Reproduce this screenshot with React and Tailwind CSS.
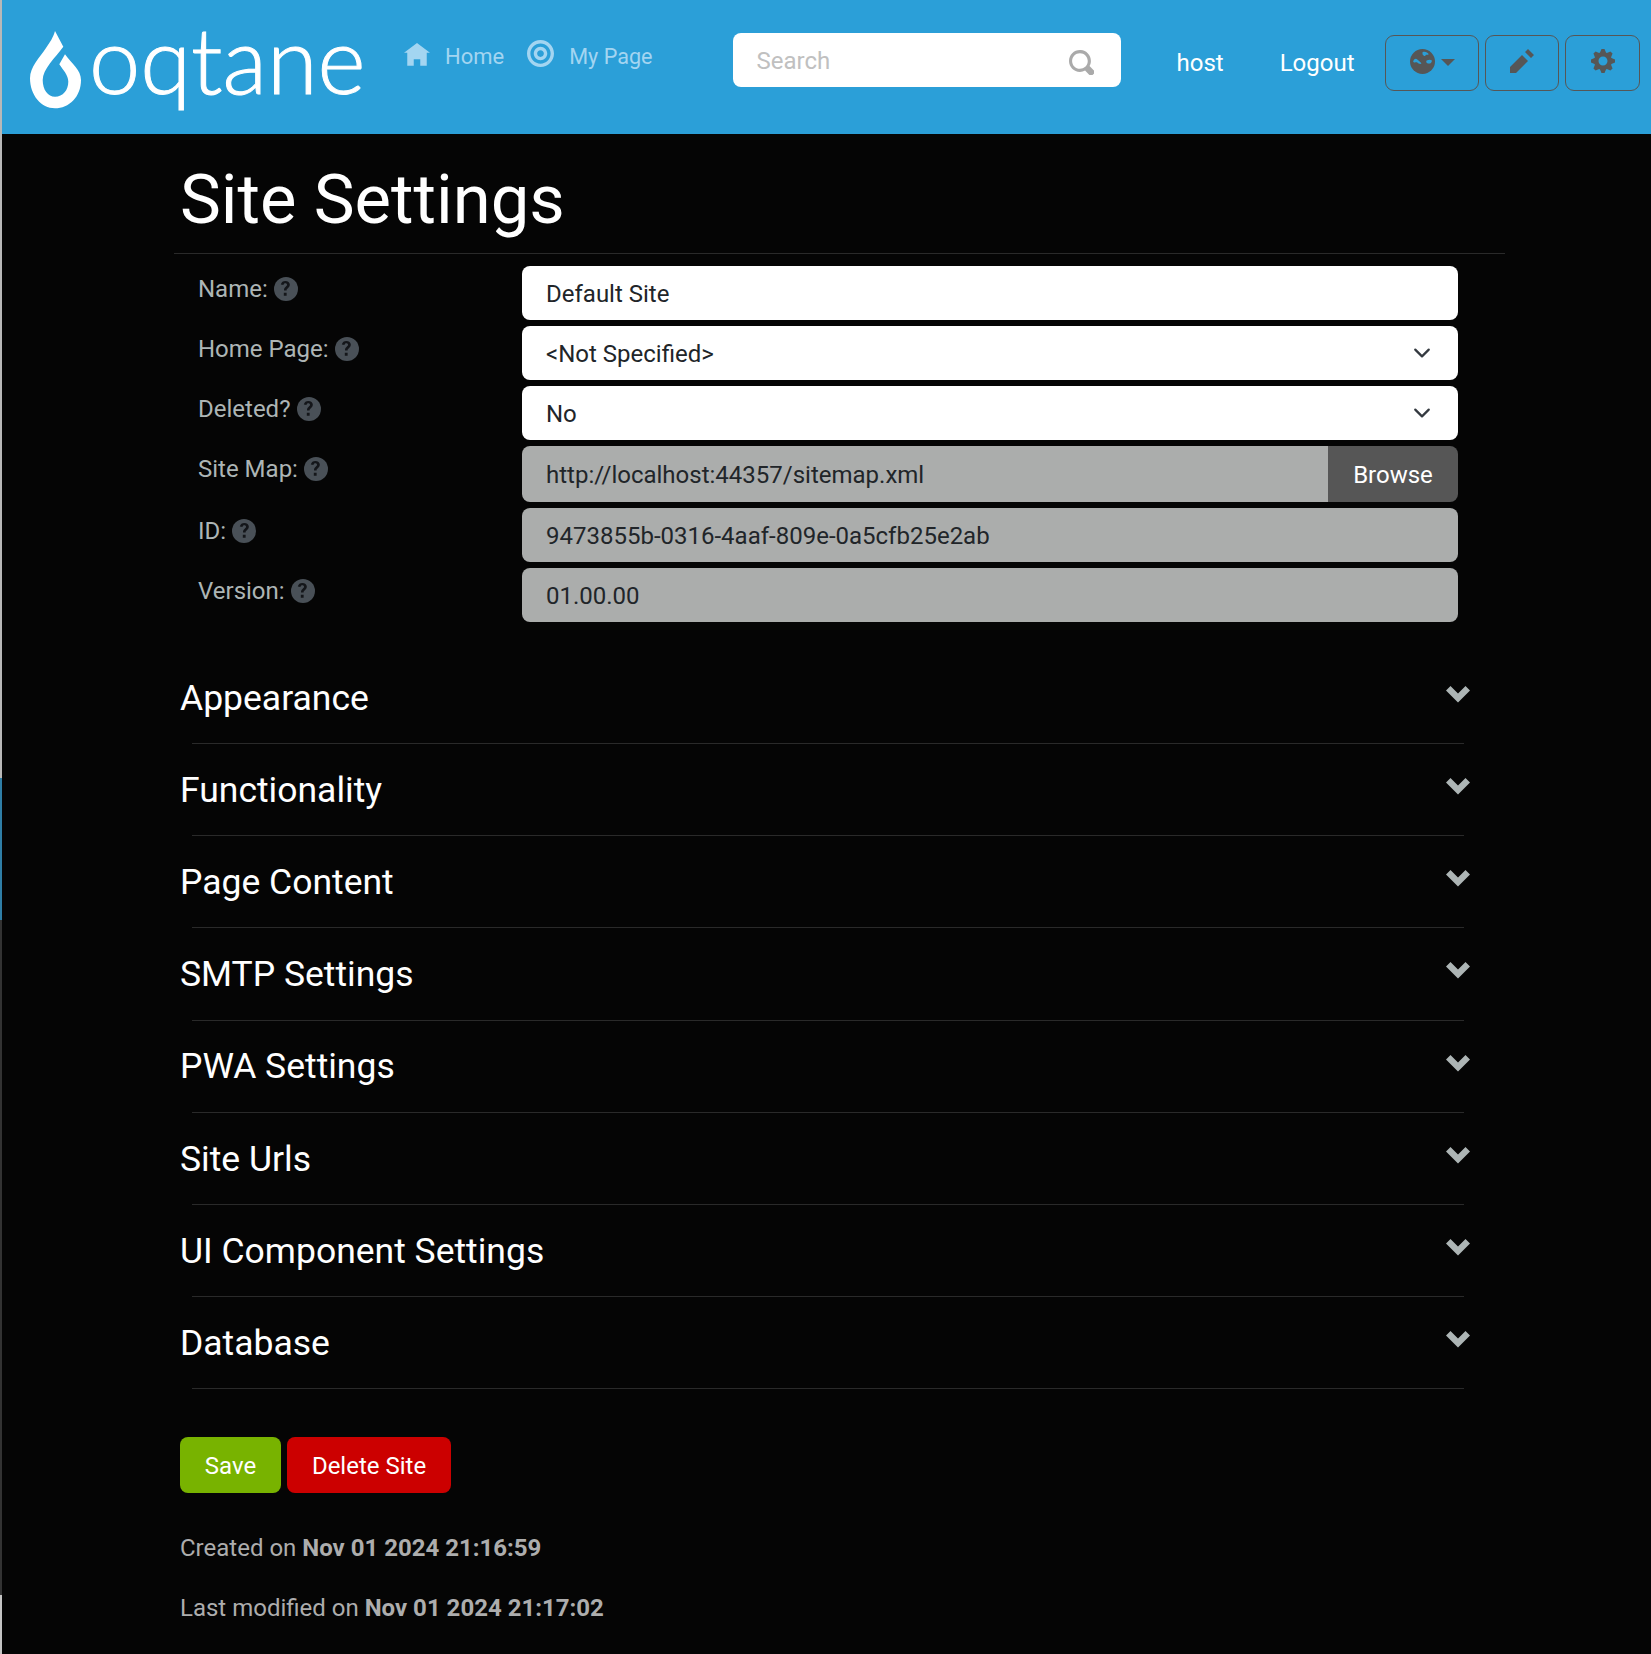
import React from 'react';

const icons = {
  home: 'M4 0l-4 3h1v4h2v-2h2v2h2v-4.03l1 .03-4-3z',
  target: 'M4 0c-2.2 0-4 1.8-4 4s1.8 4 4 4 4-1.8 4-4-1.8-4-4-4zm0 1c1.66 0 3 1.34 3 3s-1.34 3-3 3-3-1.34-3-3 1.34-3 3-3zm0 1c-1.1 0-2 .9-2 2s.9 2 2 2 2-.9 2-2-.9-2-2-2zm0 1c.56 0 1 .44 1 1s-.44 1-1 1-1-.44-1-1 .44-1 1-1z',
  pencil: 'M6 0l-1 1 2 2 1-1-2-2zm-2 2l-4 4v2h2l4-4-2-2z',
  cog: 'M3.5 0l-.5 1.19c-.1.03-.19.08-.28.13l-1.19-.5-.72.72.5 1.19c-.05.1-.09.18-.13.28l-1.19.5v1l1.19.5c.04.1.08.18.13.28l-.5 1.19.72.72 1.19-.5c.09.04.18.09.28.13l.5 1.19h1l.5-1.19c.09-.04.19-.08.28-.13l1.19.5.72-.72-.5-1.19c.04-.09.09-.19.13-.28l1.19-.5v-1l-1.19-.5c-.03-.09-.08-.19-.13-.28l.5-1.19-.72-.72-1.19.5c-.09-.04-.19-.09-.28-.13l-.5-1.19h-1zm.5 2.5c.83 0 1.5.67 1.5 1.5s-.67 1.5-1.5 1.5-1.5-.67-1.5-1.5.67-1.5 1.5-1.5z',
  search: 'M3.5 0c-1.93 0-3.5 1.57-3.5 3.5s1.57 3.5 3.5 3.5c.59 0 1.17-.14 1.66-.41a1 1 0 0 0 .13.13l1 1a1.02 1.02 0 1 0 1.44-1.44l-1-1a1 1 0 0 0-.16-.13c.27-.49.44-1.06.44-1.66 0-1.93-1.57-3.5-3.5-3.5zm0 1c1.39 0 2.5 1.11 2.5 2.5 0 .66-.24 1.27-.66 1.72-.01.01-.02.02-.03.03a1 1 0 0 0-.13.13c-.44.4-1.04.63-1.69.63-1.39 0-2.5-1.11-2.5-2.5s1.11-2.5 2.5-2.5z',
  chevron: 'M1.5 1l-1.5 1.5 4 4 4-4-1.5-1.5-2.5 2.5-2.5-2.5z',
};

function Icon({ name, className }) {
  return (
    <svg viewBox="0 0 8 8" className={className} fill="currentColor">
      <path d={icons[name]} />
    </svg>
  );
}

function Globe() {
  return (
    <svg viewBox="0 0 24 24" className="mb-[4px] h-[25px] w-[25px]">
      <circle cx="12" cy="12" r="12" fill="#565656" />
      <path d="M3 12c1-3 3-3 4-2s3 2 4 4c-1 1-3 0-4-1s-3 1-4-1z" fill="#2b9fd8" />
      <path d="M12 3c2-1 5 0 6 2-1 1-3 0-3 1s-2 1-3-1z" fill="#2b9fd8" />
      <path d="M16 11c2-1 4-1 5 0 0 2-1 3-3 3s-3-2-2-3z" fill="#2b9fd8" />
    </svg>
  );
}

function Help() {
  return (
    <span className="ml-[6px] inline-flex h-[24px] w-[24px] shrink-0 items-center justify-center rounded-full bg-[#495057]">
      <svg viewBox="0 0 8 8" className="h-[15px] w-[15px] text-[#14161a]" fill="currentColor">
        <path d="M3.9 0c-1.2 0-2.1.6-2.4 1.8l1.4.3c.1-.6.5-.9 1-.9s.9.3.9.8c0 .4-.2.6-.7 1-.6.5-.9 1-.9 1.8v.2h1.4v-.2c0-.4.2-.6.7-1 .7-.5 1-1.1 1-1.9C6.3.8 5.3 0 3.9 0zM3.1 6.3v1.6h1.5v-1.6z" />
      </svg>
    </span>
  );
}

function Row({ label, mt, children }) {
  return (
    <div className={`flex ${mt}`}>
      <label className="flex h-[44px] w-[348px] items-center pl-[24px] pt-[1px] text-[#adb5b5]">
        {label}
        <Help />
      </label>
      {children}
    </div>
  );
}

function Caret() {
  return (
    <svg viewBox="0 0 16 16" className="mb-[3px] h-[18px] w-[18px]" fill="none" stroke="#343a40" strokeWidth="2" strokeLinecap="round" strokeLinejoin="round">
      <path d="M2 5l6 6 6-6" />
    </svg>
  );
}

const inputBox = 'flex h-[54px] w-[936px] items-center rounded-[8px] px-[24px] pt-[2px]';

const sections = ['Appearance', 'Functionality', 'Page Content', 'SMTP Settings', 'PWA Settings', 'Site Urls', 'UI Component Settings', 'Database'];

export default function App() {
  return (
    <div className="relative min-h-[1654px] bg-[#050505] font-['Roboto',sans-serif] text-[24px] leading-none">
      <div className="absolute left-0 top-0 z-10 flex h-full w-[2px] flex-col">
        <div className="h-[778px] bg-[#b8b8b8]" />
        <div className="h-[142px] bg-[#2f7ea6]" />
        <div className="h-[675px] bg-[#333333]" />
        <div className="flex-1 bg-[#c4c4c4]" />
      </div>

      <nav className="flex h-[134px] bg-[#2b9fd8] pl-[30px]">
        <div className="flex w-[345px] items-start">
          <svg viewBox="0 0 51 78" className="mt-[31px] h-[78px] w-[51px] shrink-0" fill="#fff">
            <path d="M25 0L33.3 15.7C25 27 12.7 38 12.7 49C12.7 59 18 65.7 25 65.7C33 65.7 38.3 59 38.3 50.7C38.3 44 33 39 29.3 33.3L35 23.3C42 33 51 39 51 49C51 66 39 77.3 25 77.3C11 77.3 0 64 0 47.3C0 36 10 26 16 17C20 11 23 7 25 0Z" />
          </svg>
          <span className="ml-[8px] mt-[9px] font-['Lato',sans-serif] text-[92px] font-light leading-[100px] text-white [-webkit-text-stroke:1px_white]">oqtane</span>
        </div>
        <div className="flex items-start pt-[40px] text-[22px] text-[#a3d5f1]">
          <Icon name="home" className="ml-[29px] mt-[3px] h-[26px] w-[26px]" />
          <span className="ml-[15px] mt-[6px]">Home</span>
          <Icon name="target" className="ml-[23px] h-[27px] w-[27px]" />
          <span className="ml-[15px] mt-[6px] text-[21.6px]">My Page</span>
        </div>
        <div className="ml-[81px] mt-[33px] flex h-[54px] w-[388px] items-center justify-between rounded-[8px] bg-white pl-[23px] pr-[27px] pt-[2px]">
          <span className="text-[#c0c0c0]">Search</span>
          <Icon name="search" className="mt-[2px] h-[25px] w-[25px] text-[#aaaaaa]" />
        </div>
        <a className="ml-[55px] mt-[51px] text-white">host</a>
        <a className="ml-[56px] mt-[51px] text-white">Logout</a>
        <div className="ml-[31px] mt-[35px] flex h-[56px] items-start gap-[6px] text-[#565656]">
          <button className="flex h-[56px] w-[94px] items-center justify-center rounded-[9px] border border-[#565656]">
            <Globe />
            <span className="ml-[6px] mb-[2px] h-0 w-0 border-x-[7px] border-t-[7px] border-x-transparent border-t-[#565656]" />
          </button>
          <button className="flex h-[56px] w-[74px] items-center justify-center rounded-[9px] border border-[#565656]">
            <Icon name="pencil" className="mb-[4px] h-[24px] w-[24px]" />
          </button>
          <button className="flex h-[56px] w-[75px] items-center justify-center rounded-[9px] border border-[#565656]">
            <Icon name="cog" className="mb-[4px] h-[24px] w-[24px]" />
          </button>
        </div>
      </nav>

      <h1 className="ml-[180px] mt-[30px] text-[68.8px] font-normal leading-[72px] text-white">Site Settings</h1>
      <div className="ml-[174px] mt-[17px] h-px w-[1331px] bg-[#2a2a2a]" />

      <div className="ml-[174px] mt-[12px]">
        <Row label="Name:">
          <div className={`${inputBox} bg-white text-[#212529]`}>Default Site</div>
        </Row>
        <Row label="Home Page:" mt="mt-[6px]">
          <div className={`${inputBox} justify-between bg-white pr-[27px] text-[#212529]`}>
            &lt;Not Specified&gt;
            <Caret />
          </div>
        </Row>
        <Row label="Deleted?" mt="mt-[6px]">
          <div className={`${inputBox} justify-between bg-white pr-[27px] text-[#212529]`}>
            No
            <Caret />
          </div>
        </Row>
        <Row label="Site Map:" mt="mt-[6px]">
          <div className="flex h-[56px] w-[936px] overflow-hidden rounded-[8px] text-[#212529]">
            <div className="flex flex-1 items-center bg-[#abadac] px-[24px] pt-[2px]">http://localhost:44357/sitemap.xml</div>
            <div className="flex w-[130px] items-center justify-center bg-[#565656] pt-[2px] text-white">Browse</div>
          </div>
        </Row>
        <Row label="ID:" mt="mt-[6px]">
          <div className={`${inputBox} bg-[#abadac] text-[#212529]`}>9473855b-0316-4aaf-809e-0a5cfb25e2ab</div>
        </Row>
        <Row label="Version:" mt="mt-[6px]">
          <div className={`${inputBox} bg-[#abadac] text-[#212529]`}>01.00.00</div>
        </Row>
      </div>

      <div className="mt-[30px]">
        {sections.map((title) => (
          <div key={title}>
            <div className="flex h-[91.15px] items-center justify-between pl-[180px] pr-[181px] pt-[2px]">
              <span className="text-[35.5px] text-white">{title}</span>
              <Icon name="chevron" className="mb-[7px] h-[24px] w-[24px] text-[#adb5b5]" />
            </div>
            <div className="ml-[192px] h-px w-[1272px] bg-[#2a2a2a]" />
          </div>
        ))}
      </div>

      <div className="ml-[180px] mt-[48px] flex gap-[6px] text-white">
        <button className="flex h-[56px] w-[101px] items-center justify-center rounded-[8px] bg-[#78b300] pt-[2px]">Save</button>
        <button className="flex h-[56px] w-[164px] items-center justify-center rounded-[8px] bg-[#cc0000] pt-[2px]">Delete Site</button>
      </div>
      <p className="ml-[180px] mt-[43px] text-[#adadad]">
        Created on <b>Nov 01 2024 21:16:59</b>
      </p>
      <p className="ml-[180px] mt-[36px] text-[#adadad]">
        Last modified on <b>Nov 01 2024 21:17:02</b>
      </p>
    </div>
  );
}
